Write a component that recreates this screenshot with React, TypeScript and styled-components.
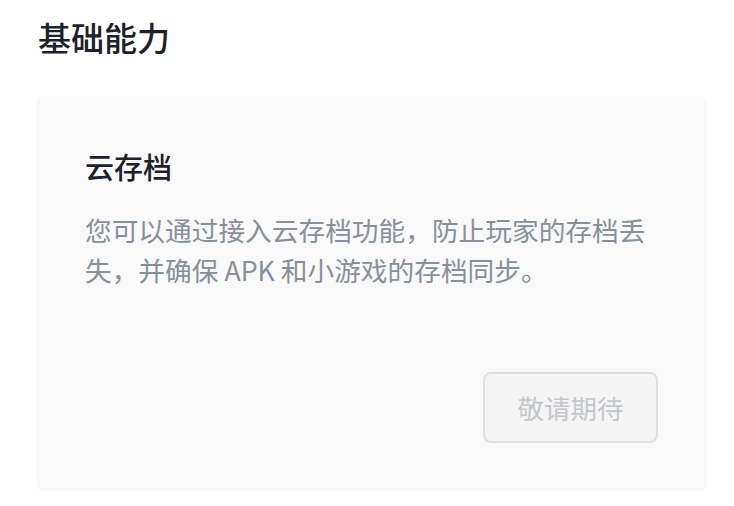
import React from "react";
import styled, { createGlobalStyle } from "styled-components";

const GlobalStyle = createGlobalStyle`
  html, body {
    margin: 0;
    padding: 0;
    background: #ffffff;
    font-family: "Noto Sans CJK SC", "Noto Sans", sans-serif;
  }
`;

const Page = styled.div`
  padding: 12px 27px 0 36px;
  display: flex;
  flex-direction: column;
`;

const SectionTitle = styled.h2`
  margin: 0 0 0 2px;
  font-size: 33px;
  line-height: 50px;
  font-weight: 500;
  color: #1d2129;
`;

const Card = styled.div`
  margin-top: 34px;
  height: 395px;
  box-sizing: border-box;
  background: #f9f9f9;
  border-radius: 8px;
  padding: 50px 49px 48px 49px;
  display: flex;
  flex-direction: column;
`;

const CardTitle = styled.div`
  font-size: 29px;
  line-height: 40px;
  font-weight: 500;
  color: #1d2129;
`;

const Desc = styled.p`
  margin: 24px 0 0;
  font-size: 26.7px;
  line-height: 40px;
  color: #86909c;
`;

const Actions = styled.div`
  margin-top: auto;
  display: flex;
  justify-content: flex-end;
`;

const Btn = styled.button`
  width: 175px;
  height: 71px;
  box-sizing: border-box;
  border: 2px solid #dcdfe3;
  border-radius: 8px;
  background: #f4f4f5;
  color: #c4c7cc;
  font-family: inherit;
  font-size: 26.5px;
  cursor: not-allowed;
`;

const App = () => {
  return (
    <>
      <GlobalStyle />
      <Page>
        <SectionTitle>基础能力</SectionTitle>
        <Card>
          <CardTitle>云存档</CardTitle>
          <Desc>
            您可以通过接入云存档功能，防止玩家的存档丢失，并确保 APK
            和小游戏的存档同步。
          </Desc>
          <Actions>
            <Btn disabled>敬请期待</Btn>
          </Actions>
        </Card>
      </Page>
    </>
  );
};

export default App;
